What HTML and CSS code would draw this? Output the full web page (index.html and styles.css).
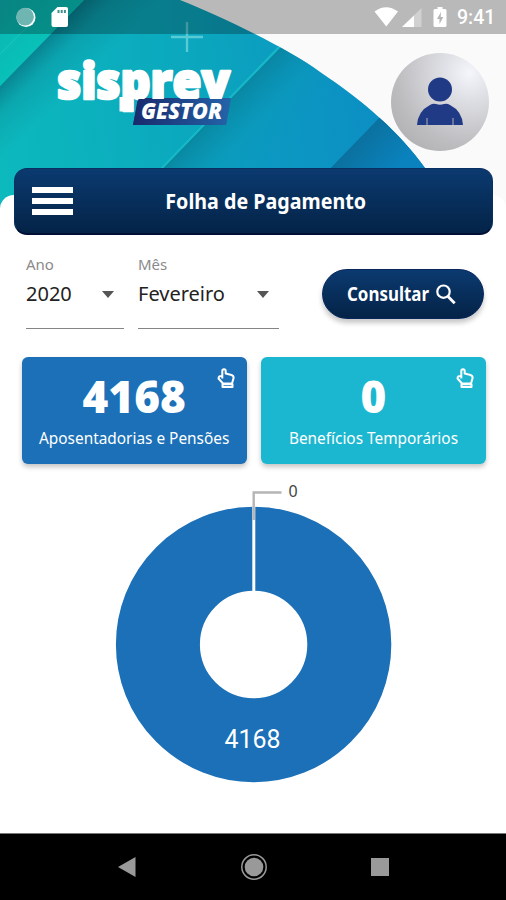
FILE: index.html
```html
<!DOCTYPE html>
<html lang="pt-BR">
<head>
<meta charset="utf-8">
<title>Sisprev Gestor</title>
<link rel="stylesheet" href="styles.css">
</head>
<body>
<div class="app">
  <header class="hero">
    <svg class="hero-art" viewBox="0 0 506 210" aria-hidden="true">
      <defs>
        <linearGradient id="teal" gradientUnits="userSpaceOnUse" x1="0" y1="150" x2="420" y2="110">
          <stop offset="0" stop-color="#0cb9bd"/><stop offset=".5" stop-color="#0ba6be"/><stop offset="1" stop-color="#0d8bc4"/>
        </linearGradient>
        <linearGradient id="shade1" gradientUnits="userSpaceOnUse" x1="42" y1="43" x2="80" y2="81">
          <stop offset="0" stop-color="#065f72" stop-opacity=".58"/><stop offset=".4" stop-color="#077080" stop-opacity=".22"/><stop offset="1" stop-color="#077080" stop-opacity="0"/>
        </linearGradient>
        <linearGradient id="shade2" gradientUnits="userSpaceOnUse" x1="220" y1="108" x2="275" y2="160">
          <stop offset="0" stop-color="#087e98" stop-opacity=".75"/><stop offset=".5" stop-color="#0a94bb" stop-opacity=".55"/><stop offset="1" stop-color="#0b8cc5" stop-opacity=".35"/>
        </linearGradient>
        <linearGradient id="shade3" gradientUnits="userSpaceOnUse" x1="355" y1="143" x2="390" y2="175">
          <stop offset="0" stop-color="#0b719f"/><stop offset="1" stop-color="#0a82bd"/>
        </linearGradient>
        <linearGradient id="mint" gradientUnits="userSpaceOnUse" x1="0" y1="0" x2="45" y2="45">
          <stop offset="0" stop-color="#0bb3b2"/><stop offset="1" stop-color="#08c2b8"/>
        </linearGradient>
        <clipPath id="dome"><path d="M0 0H180C220 16 286 47 320 72C365 102 400 133 425 168Q435 182 443 210H0Z"/></clipPath>
      </defs>
      <g clip-path="url(#dome)">
        <path fill="url(#teal)" d="M0 0H506V210H0Z"/>
        <path fill="url(#shade1)" d="M84 0H230L20 210H0V86Z"/>
        <path fill="url(#mint)" d="M0 0H84L0 86Z"/>
        <path stroke="#32cbc5" stroke-opacity=".5" d="M31 23L0 54" fill="none"/>
        <path fill="url(#shade2)" d="M283 45L163 168V210H450V45Z"/>
        <path fill="none" stroke="#17b9c7" stroke-width="2" d="M283 43L160 170"/>
        <path fill="url(#shade3)" d="M382 115L290 210H450V115Z"/>
        <path fill="none" stroke="#8ce3e8" stroke-opacity=".6" stroke-width="2.4" d="M171 37H203M187 22V52"/>
      </g>
    </svg>
    <div class="status">
      <svg width="54" height="24" viewBox="0 0 54 24" fill="#fff">
        <circle cx="11" cy="12.500" r="9.500"/><circle cx="10" cy="11.700" r="8.900" fill="#6fb5b2"/>
        <path d="M42.500 2H51Q53 2 53 4V20Q53 22 51 22H38.500Q36.500 22 36.500 20V8Z"/><path stroke="#41908d" stroke-width="3" stroke-dasharray="2 1.200" d="M42.500 6.500H51"/>
      </svg>
      <div class="status-right">
        <svg width="76" height="24" viewBox="0 0 76 24" fill="#fff">
          <path d="M1.500 6.500Q13 -2 25 6.500L13.300 21.500Z"/>
          <path opacity=".35" d="M48.500 3V22H29Z"/><path d="M41 10.500V22H29Z"/>
          <path d="M64.500 2H69.500V4H72Q73.500 4 73.500 5.500V20.500Q73.500 22 72 22H62Q60.500 22 60.500 20.500V5.500Q60.500 4 62 4H64.500Z"/><path fill="#b5b5b5" d="M68 7L64 14H66.500V19L70.300 12H67.700Z"/>
        </svg>
        <span class="clock">9:41</span>
      </div>
    </div>
    <div class="brand">
      <svg class="logo" width="190" height="100" viewBox="0 -12 190 100">
        <defs><linearGradient id="tag"><stop offset="0" stop-color="#192a6c"/><stop offset="1" stop-color="#2463a9"/></linearGradient></defs>
        <path fill="url(#tag)" d="M88 45H181L176 72H83Z"/>
        <text class="logo-name" x="7" y="46" textLength="173" lengthAdjust="spacingAndGlyphs">sisprev</text>
        <path fill="url(#tag)" d="M88.500 46H180.500L176 72H83Z"/>
        <path fill="#fff" d="M69.500 44H80V58.500H69.500Z"/>
        <text class="logo-tag" x="91" y="66" textLength="81" lengthAdjust="spacingAndGlyphs">GESTOR</text>
      </svg>
      <div class="avatar">
        <svg width="48" height="50" viewBox="0 0 48 50" fill="#203a86">
          <circle cx="24" cy="12.500" r="12"/>
          <path d="M1 48Q2 34 14 28Q17 26 20 27Q24 28.500 28 27Q31 26 34 28Q46 34 47 48Z"/>
          <path stroke="#aeb1bd" d="M11 41V48M37 41V48"/>
        </svg>
      </div>
    </div>
  </header>

  <main class="sheet">
    <nav class="titlebar">
      <div class="menu"><i></i><i></i><i></i></div>
      <h1><span class="fit-title">Folha de Pagamento</span></h1>
    </nav>

    <section class="filters">
      <div class="field year"><label>Ano</label><div class="value"><span>2020</span><b class="caret"></b></div></div>
      <div class="field month"><label>Mês</label><div class="value"><span>Fevereiro</span><b class="caret"></b></div></div>
      <button class="search"><span class="fit-search">Consultar</span>
        <svg width="20" height="21" viewBox="0 0 20 21" fill="none" stroke="#fff"><circle cx="7.500" cy="7.700" r="6.200" stroke-width="2.200"/><path stroke-width="2.800" d="M12 12.500L18.700 19.300"/></svg>
      </button>
    </section>

    <section class="cards">
      <article class="card blue">
        <strong>4168</strong><span class="caption">Aposentadorias e Pensões</span>
        <svg class="hand" width="18" height="21" viewBox="0 0 18 21" fill="none" stroke="#fff" stroke-width="2" stroke-linejoin="round"><path d="M5.300 9V3Q5.300 1.200 7 1.200T8.700 3V5.500L14.500 7Q16.800 7.800 16.600 10L15 15.500H6L1.500 10.500Q1.500 7.500 5.300 8V10.500"/><path d="M5.500 16.200H15.500V19H5.500Z"/></svg>
      </article>
      <article class="card cyan">
        <strong>0</strong><span class="caption">Benefícios Temporários</span>
        <svg class="hand" width="18" height="21" viewBox="0 0 18 21" fill="none" stroke="#fff" stroke-width="2" stroke-linejoin="round"><path d="M5.300 9V3Q5.300 1.200 7 1.200T8.700 3V5.500L14.500 7Q16.800 7.800 16.600 10L15 15.500H6L1.500 10.500Q1.500 7.500 5.300 8V10.500"/><path d="M5.500 16.200H15.500V19H5.500Z"/></svg>
      </article>
    </section>

    <svg class="chart" width="300" height="310" viewBox="100 480 300 310">
      <circle cx="253.600" cy="644.500" r="95.700" fill="none" stroke="#1b70b7" stroke-width="84"/>
      <path stroke="#fff" stroke-width="3" d="M253.800 505V593"/>
      <path fill="none" stroke="#b5b5b5" stroke-width="2.400" d="M253.700 520V492.500H281.500"/>
      <text class="label-out" x="288.500" y="496.500">0</text>
      <text class="label-in" x="252.500" y="747.500" text-anchor="middle" textLength="56" lengthAdjust="spacingAndGlyphs">4168</text>
    </svg>
  </main>

  <footer class="navkeys">
    <svg width="18" height="20" viewBox="0 0 18 20"><path fill="#999" d="M17.500 0V20L0 10Z"/></svg>
    <svg width="28" height="28" viewBox="0 0 28 28"><circle cx="14" cy="14" r="9.300" fill="#999"/><circle cx="14" cy="14" r="12.200" fill="none" stroke="#999" stroke-width="1.500"/></svg>
    <svg width="18" height="18" viewBox="0 0 18 18"><path fill="#999" d="M0 0H18V18H0Z"/></svg>
  </footer>
</div>
</body>
</html>
```

FILE: styles.css
```css
* { box-sizing: border-box; }
body { margin: 0; font-family: "Noto Sans", "Open Sans", sans-serif; background: #fff; }
.app { width: 506px; height: 900px; display: flex; flex-direction: column; overflow: hidden; }
.hero { height: 168px; position: relative; background: #fafafa; }
.hero-art { position: absolute; top: 0; left: 0; width: 506px; height: 210px; background: #fafafa; }
.status { position: relative; height: 34px; padding: 5px 9px 0 15px; display: flex; justify-content: space-between; background: rgba(0,0,0,.26); }
.status-right { display: flex; gap: 8px; }
.clock { font: 500 19.5px/26px Roboto, sans-serif; color: #fff; width: 40px; }
.brand { position: relative; display: flex; justify-content: space-between; padding: 19px 17px 0 50px; }
.logo-name { font: 800 49px "Open Sans", sans-serif; fill: #fff; stroke: #fff; stroke-width: 2.6px; stroke-linejoin: round; }
.logo-tag { font: italic 800 22px "Open Sans", sans-serif; fill: #fff; }
.avatar { width: 98px; height: 98px; border-radius: 50%; background: radial-gradient(circle at 80% 20%, #f5f6fb 0, #dedfe4 25%, #bdbdc0 65%, #a9a9aa 100%); display: flex; justify-content: center; padding-top: 24px; }
.logo { flex: none; margin-top: -12px; }
.sheet { flex: 1; position: relative; display: flex; flex-direction: column; }
.sheet::before { content: ""; position: absolute; top: 27px; left: 0; right: 0; bottom: 0; background: #fff; border-radius: 14px 14px 0 0; }
.sheet > * { position: relative; }
.titlebar { margin: 0 13px 0 14px; height: 67px; border-radius: 13px; display: flex; align-items: center; padding: 0 17px; background: linear-gradient(#0b3a70, #042347); border: 1px solid #092e60; border-bottom: 2px solid #000f36; }
.menu { width: 41px; display: flex; flex-direction: column; gap: 5px; }
.menu i { height: 6px; background: #fff; }
h1 { margin: 0 16px 0 0; flex: 1; text-align: center; color: #fff; font-size: 21.5px; line-height: 30px; font-weight: 700; white-space: nowrap; }
.fit-title { display: inline-block; transform: scaleX(.915); }
.filters { display: flex; height: 94px; padding: 20px 22px 0 26px; align-items: flex-start; }
.field { height: 74px; border-bottom: 1px solid #858585; }
.year { width: 98px; margin-right: 14px; }
.month { width: 141px; margin-right: 43px; }
.field label { display: block; font-size: 15px; line-height: 19px; color: #8a8a8a; }
.value { display: flex; justify-content: space-between; align-items: center; font-size: 20px; line-height: 40px; color: #222; padding-right: 10px; }
.caret { border: 6.5px solid transparent; border-top: 7px solid #555; border-bottom: 0; }
.search { margin-top: 14px; width: 162px; height: 50px; border: 1px solid #08275c; border-radius: 25px; color: #fff; background: linear-gradient(#0b3a70, #042347); display: flex; align-items: center; gap: 7px; padding: 0 0 0 24px; font: 700 19px "Noto Sans", sans-serif; box-shadow: 0 4px 5px rgba(0,0,0,.22); }
.fit-search { width: 82px; transform: scaleX(.89); transform-origin: left; white-space: nowrap; }
.cards { display: flex; gap: 14px; margin: 28px 20px 0 21.5px; }
.card { position: relative; flex: 1; height: 107px; border-radius: 6px; color: #fff; display: flex; flex-direction: column; align-items: center; box-shadow: 0 3px 5px rgba(0,0,0,.23); }
.blue { background: #1b70b8; }
.cyan { background: #1bb7d0; }
.card strong { font: 800 44px/50px "Open Sans", sans-serif; margin-top: 14px; }
.caption { font-size: 17px; line-height: 24px; margin-top: 5px; white-space: nowrap; transform: scaleX(.905); }
.hand { position: absolute; right: 12px; top: 11px; }
.chart { margin: 16px 0 0 100px; display: block; }
.label-out { font: 16px "Noto Sans", sans-serif; fill: #444; }
.label-in { font: 25px Roboto, sans-serif; fill: #fff; }
.navkeys { height: 67px; border-top: 1px solid #777; background: #000; display: flex; align-items: center; justify-content: space-between; padding: 0 117px 0 118px; }
```
